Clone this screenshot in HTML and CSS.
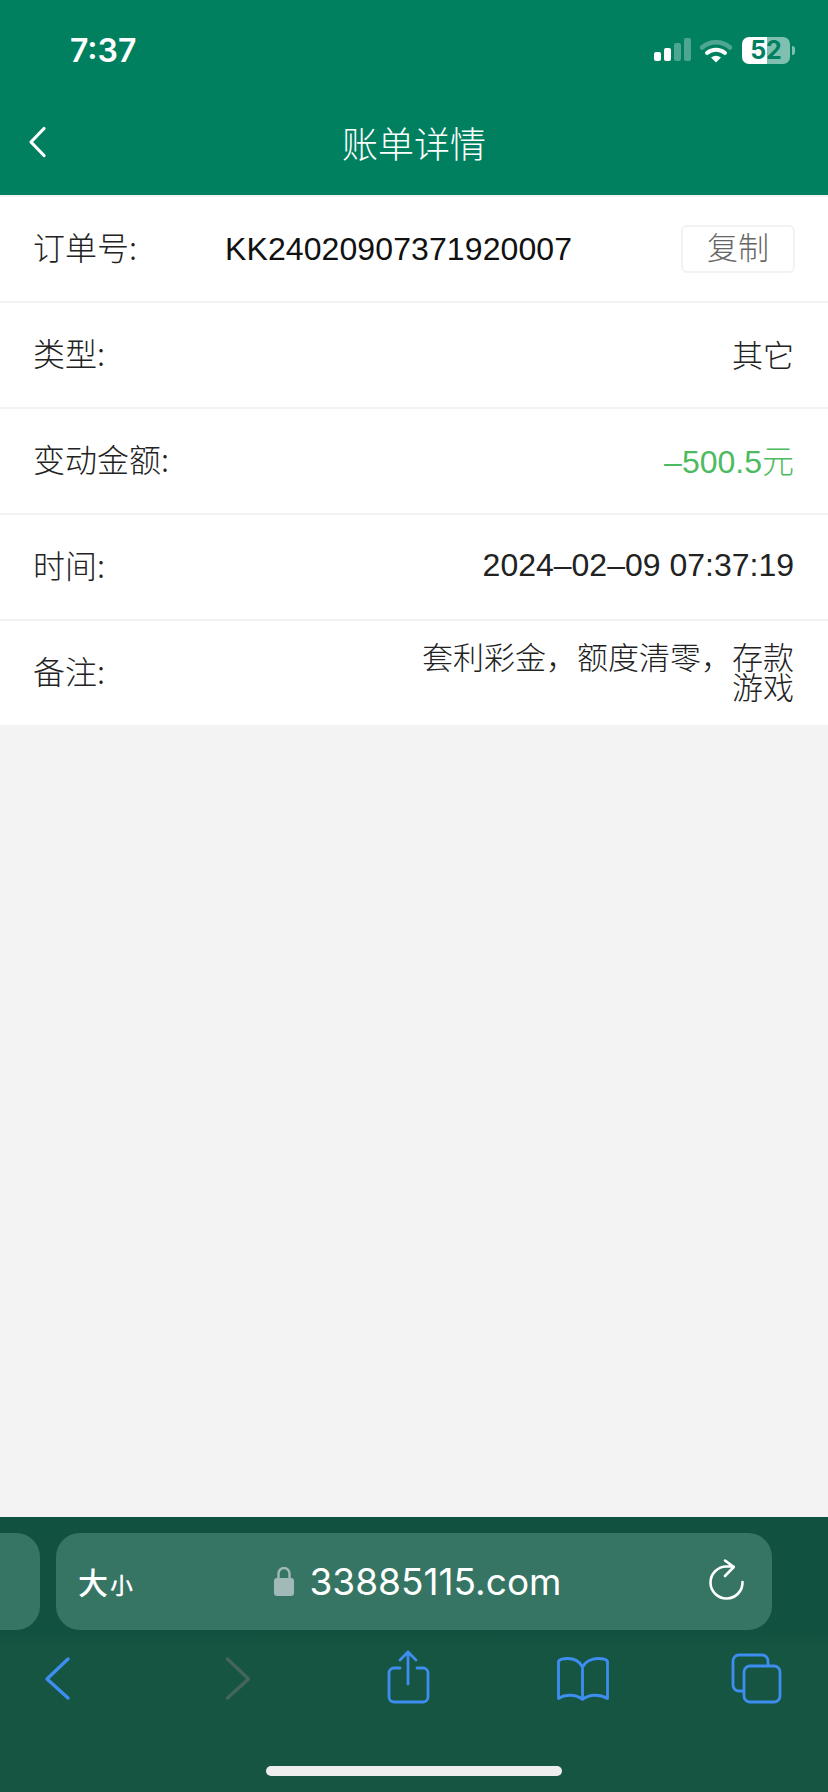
FILE: index.html
```html
<!DOCTYPE html>
<html lang="zh">
<head>
<meta charset="utf-8">
<title>账单详情</title>
<link rel="stylesheet" href="styles.css">
</head>
<body>
<div class="app">
  <header class="top">
    <div class="status">
      <span class="clock">7:37</span>
      <div class="status-icons">
        <svg class="signal" width="38" height="24" viewBox="653 38 38 24">
          <rect x="653" y="52" width="7" height="9" rx="2" fill="#fff"/>
          <rect x="663" y="48" width="7" height="13" rx="2" fill="#fff"/>
          <rect x="673" y="43" width="7" height="18" rx="2" fill="#fff" fill-opacity=".3"/>
          <rect x="683" y="38" width="7" height="23" rx="2" fill="#fff" fill-opacity=".3"/>
        </svg>
        <svg class="wifi" width="32" height="25" viewBox="700 37 32 25">
          <path d="M702 46.500a21 21 0 0 1 28 0" fill="none" stroke="#fff" stroke-opacity=".3" stroke-width="4.500" stroke-linecap="round"/>
          <path d="M707 52a14 14 0 0 1 18 0" fill="none" stroke="#fff" stroke-width="4" stroke-linecap="round"/>
          <path d="M711 56.500q5-3.600 10 0l-5 5z" fill="#fff"/>
        </svg>
        <div class="battery"><span>52</span></div>
        <div class="battery-cap"></div>
      </div>
    </div>
    <nav class="nav">
      <svg class="nav-back" width="20" height="32" viewBox="0 0 20 32"><path d="M17 2.500 4 16l13 13.500" fill="none" stroke="#fff" stroke-width="3.200" stroke-linecap="round" stroke-linejoin="round"/></svg>
      <h1 class="nav-title">账单详情</h1>
    </nav>
  </header>

  <main class="content">
    <section class="list">
      <div class="row">
        <span class="label label-wide">订单号:</span>
        <span class="value value-order">KK24020907371920007</span>
        <button class="copy">复制</button>
      </div>
      <div class="row">
        <span class="label">类型:</span>
        <span class="value value-cjk">其它</span>
      </div>
      <div class="row">
        <span class="label">变动金额:</span>
        <span class="value value-green">–500.5元</span>
      </div>
      <div class="row">
        <span class="label">时间:</span>
        <span class="value">2024–02–09 07:37:19</span>
      </div>
      <div class="row">
        <span class="label">备注:</span>
        <span class="value value-cjk value-note">套利彩金，额度清零，存款游戏</span>
      </div>
    </section>
  </main>

  <footer class="toolbar">
    <div class="address-row">
      <div class="tab-peek"></div>
      <div class="address">
        <span class="aa"><span class="aa-big">大</span><span class="aa-small">小</span></span>
        <div class="domain">
          <svg width="20" height="29" viewBox="274 1568 20 29"><path d="M278.500 1580v-5.500a5.500 5.500 0 0 1 11 0v5.500" fill="none" stroke="#a1b9b8" stroke-width="2.400"/><rect x="274" y="1579" width="20" height="18" rx="3" fill="#a1b9b8"/></svg>
          <span class="domain-text">33885115.com</span>
        </div>
        <svg class="reload" width="38" height="42" viewBox="708 1558 38 42"><path d="M742.500 1582a16 16 0 1 1-16-15.500h7M725 1560.500l8.800 6.500-8.800 9" fill="none" stroke="#fff" stroke-width="2.600" stroke-linecap="round" stroke-linejoin="round"/></svg>
      </div>
    </div>
    <div class="tools">
      <svg class="tool" viewBox="28 1645 60 60"><path d="M68 1659 47 1679l21 19" fill="none" stroke="#3d8ef0" stroke-width="3.400" stroke-linecap="round" stroke-linejoin="round"/></svg>
      <svg class="tool" viewBox="202.500 1645 60 60"><path d="M227 1659l21 20-21 19" fill="none" stroke="#44665a" stroke-width="3.400" stroke-linecap="round" stroke-linejoin="round"/></svg>
      <svg class="tool" viewBox="377 1645 60 60"><path d="M400 1668h-6a5 5 0 0 0-5 5v24a5 5 0 0 0 5 5h29a5 5 0 0 0 5-5v-24a5 5 0 0 0-5-5h-6M408 1684v-32M400 1660l8-8 8 8" fill="none" stroke="#3d8ef0" stroke-width="2.800" stroke-linecap="round" stroke-linejoin="round"/></svg>
      <svg class="tool" viewBox="551.500 1645 60 60"><path d="M582 1667c-3-6-9-8.500-15-8.500-4 0-8 1-9 3v37c6-4 17-5 24 1 7-6 18-5 25-1v-37c-1-2-5-3-9-3-6 0-13 2.500-16 8.500zv32" fill="none" stroke="#3d8ef0" stroke-width="2.800" stroke-linecap="round" stroke-linejoin="round"/></svg>
      <svg class="tool" viewBox="726 1645 60 60"><path d="M743 1691h-4a6 6 0 0 1-6-6v-24a6 6 0 0 1 6-6h23a6 6 0 0 1 6 6v4" fill="none" stroke="#3d8ef0" stroke-width="2.800" stroke-linecap="round"/><rect x="744" y="1666" width="36" height="36" rx="6" fill="none" stroke="#3d8ef0" stroke-width="2.800"/></svg>
    </div>
    <div class="home-indicator"></div>
  </footer>
</div>
</body>
</html>
```

FILE: styles.css
```css
* { box-sizing: border-box; }

html, body {
  margin: 0;
  padding: 0;
}

body {
  background: #f3f3f3;
  font-family: "Liberation Sans", "Noto Sans CJK SC", sans-serif;
}

.app {
  display: flex;
  flex-direction: column;
  height: 1792px;
  overflow: hidden;
}

.top {
  background: #018060;
  color: #fff;
  height: 195px;
  flex: none;
}

.status {
  height: 100px;
  display: flex;
  align-items: center;
  justify-content: space-between;
  padding: 0 33px 0 70px;
}

.clock {
  font-family: Inter, "Liberation Sans", sans-serif;
  font-weight: 600;
  font-size: 32px;
}

.status-icons {
  display: flex;
  align-items: center;
}

.signal { margin-right: 8px; }

.wifi { margin-right: 10px; }

.battery {
  width: 48px;
  height: 27px;
  border-radius: 7px;
  background: linear-gradient(90deg, #fff 52%, rgba(255, 255, 255, .5) 52%);
  color: #018060;
  font-family: Inter, "Liberation Sans", sans-serif;
  font-weight: 700;
  font-size: 25px;
  line-height: 27px;
  text-align: center;
}

.battery-cap {
  width: 3px;
  height: 9px;
  margin-left: 2px;
  border-radius: 0 3px 3px 0;
  background: rgba(255, 255, 255, .5);
}

.nav {
  position: relative;
  height: 95px;
  display: flex;
  align-items: flex-start;
  justify-content: center;
}

.nav-back {
  position: absolute;
  left: 27px;
  top: 26px;
}

.nav-title {
  margin: 0;
  font-family: "Noto Sans CJK SC", sans-serif;
  font-weight: 300;
  font-size: 36px;
  line-height: 84px;
}

.content {
  flex: 1;
  padding-top: 2px;
  background: #f3f3f3;
}

.list { background: #fff; }

.row {
  height: 106px;
  padding: 0 34px 0 33px;
  display: flex;
  align-items: center;
  justify-content: space-between;
  border-bottom: 2px solid #f2f2f2;
}

.row:last-child {
  height: 104px;
  border-bottom: 0;
}

.label {
  flex: none;
  padding-bottom: 7px;
  font-family: "Noto Sans CJK SC", sans-serif;
  font-weight: 300;
  font-size: 32px;
  color: #222;
}

.label-wide { width: 192px; }

.value {
  padding-bottom: 4px;
  font-family: "Liberation Sans", "Noto Sans CJK SC", sans-serif;
  font-weight: 300;
  font-size: 32px;
  color: #222;
  text-align: right;
}

.value-cjk { font-size: 31px; }

.value-order {
  flex: 1;
  padding-bottom: 0;
  text-align: left;
  letter-spacing: .1px;
  color: #111;
}

.value-green { color: #4cbb5f; }

.value-note {
  width: 380px;
  padding-bottom: 5px;
  line-height: 30px;
  font-family: "Noto Sans CJK SC", sans-serif;
}

.copy {
  flex: none;
  width: 114px;
  height: 48px;
  margin-right: -1px;
  padding: 0 0 6px;
  border: 2px solid #f2f2f2;
  border-radius: 6px;
  background: #fff;
  color: #666;
  font-family: "Noto Sans CJK SC", sans-serif;
  font-weight: 300;
  font-size: 31px;
  line-height: 38px;
}

.toolbar {
  flex: none;
  height: 275px;
  padding-top: 16px;
  background: linear-gradient(180deg, #11513f 0, #11513f 113px, #165542 135px);
}

.address-row {
  display: flex;
  gap: 16px;
  height: 97px;
}

.tab-peek {
  width: 40px;
  border-radius: 0 24px 24px 0;
  background: #367563;
}

.address {
  position: relative;
  width: 716px;
  border-radius: 24px;
  background: #367563;
  color: #fff;
  display: flex;
  align-items: center;
  justify-content: center;
}

.aa {
  position: absolute;
  left: 22px;
  top: 26px;
  display: flex;
  gap: 2px;
  align-items: baseline;
  font-family: "Noto Sans CJK SC", sans-serif;
  font-weight: 500;
  line-height: 44px;
}

.aa-big { font-size: 30px; }

.aa-small { font-size: 23px; }

.domain {
  display: flex;
  align-items: center;
  gap: 16px;
  margin-left: 7px;
}

.domain-text {
  font-family: Inter, "Liberation Sans", sans-serif;
  font-size: 37px;
  line-height: 46px;
}

.reload {
  position: absolute;
  left: 652px;
  top: 25px;
}

.tools {
  margin-top: 15px;
  display: flex;
  justify-content: space-between;
  padding: 0 42px 0 28px;
}

.tool {
  width: 60px;
  height: 60px;
}

.home-indicator {
  width: 296px;
  height: 10px;
  margin: 61px auto 0;
  border-radius: 5px;
  background: #eee;
}
```
